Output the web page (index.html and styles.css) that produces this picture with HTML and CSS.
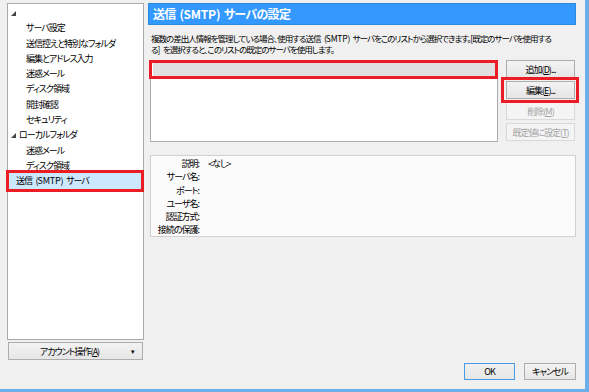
FILE: index.html
```html
<!DOCTYPE html>
<html lang="ja">
<head>
<meta charset="utf-8">
<link rel="stylesheet" href="styles.css">
</head>
<body>
<div class="window">
  <div class="dialog">
    <div class="content">
      <aside class="sidebar">
        <div class="tree">
          <div class="row lvl0"><svg class="arrow" width="5" height="5" viewBox="0 0 5 5"><polygon points="5,0 5,5 0,5" fill="#444"/></svg></div>
          <div class="row lvl1">サーバ設定</div>
          <div class="row lvl1">送信控えと特別なフォルダ</div>
          <div class="row lvl1">編集とアドレス入力</div>
          <div class="row lvl1">迷惑メール</div>
          <div class="row lvl1">ディスク領域</div>
          <div class="row lvl1">開封確認</div>
          <div class="row lvl1">セキュリティ</div>
          <div class="row lvl0"><svg class="arrow" width="5" height="5" viewBox="0 0 5 5"><polygon points="5,0 5,5 0,5" fill="#444"/></svg>ローカルフォルダ</div>
          <div class="row lvl1">迷惑メール</div>
          <div class="row lvl1">ディスク領域</div>
          <div class="row lvl0 selected"><span class="sel-text">送信 (<span class="lat">SMTP</span>) サーバ</span><span class="mark mark-tree"></span></div>
        </div>
        <button class="btn account"><span class="acc-label">アカウント操作(<u>A</u>)</span><span class="caret">▾</span></button>
      </aside>
      <main class="main">
        <h1 class="header">送信 (<span class="lat">SMTP</span>) サーバの設定</h1>
        <p class="desc">複数の差出人情報を管理している場合、使用する送信 (<span class="lat">SMTP</span>) サーバをこのリストから選択できます。[既定のサーバを使用する<br>る] を選択すると、このリストの既定のサーバを使用します。</p>
        <div class="list-row">
          <div class="listbox">
            <div class="list-item"></div>
            <span class="mark mark-list"></span>
          </div>
          <div class="side-buttons">
            <button class="btn side">追加(<u>D</u>)...</button>
            <div class="edit-wrap">
              <button class="btn side">編集(<u>E</u>)...</button>
              <span class="mark mark-edit"></span>
            </div>
            <button class="btn side disabled">削除(<u>M</u>)</button>
            <button class="btn side disabled">既定値に設定(<u>T</u>)</button>
          </div>
        </div>
        <div class="details">
          <span class="lbl">説明:</span><span class="val">&lt;なし&gt;</span>
          <span class="lbl">サーバ名:</span><span class="val"></span>
          <span class="lbl">ポート:</span><span class="val"></span>
          <span class="lbl">ユーザ名:</span><span class="val"></span>
          <span class="lbl">認証方式:</span><span class="val"></span>
          <span class="lbl">接続の保護:</span><span class="val"></span>
        </div>
      </main>
    </div>
    <div class="footer">
      <button class="btn foot default">OK</button>
      <button class="btn foot">キャンセル</button>
    </div>
  </div>
</div>
</body>
</html>
```

FILE: styles.css
```css
* { box-sizing: border-box; }
html, body { margin: 0; padding: 0; }
body {
  width: 589px;
  height: 392px;
  overflow: hidden;
  background: #f0f0f0;
  font-family: "Noto Sans CJK JP", "Noto Sans", sans-serif;
  font-size: 9px;
  letter-spacing: -1px;
  word-spacing: 2.5px;
  font-feature-settings: "palt";
  color: #000;
}
.lat { letter-spacing: -0.2px; }
.window {
  width: 589px;
  height: 392px;
  border-right: 4px solid #6aaeea;
  border-bottom: 3px solid #6aaeea;
}
.dialog {
  height: 389px;
  padding: 3px 9px 0 7px;
  display: flex;
  flex-direction: column;
}
.content {
  display: flex;
  gap: 4px;
  height: 357px;
}
.sidebar {
  width: 137px;
  display: flex;
  flex-direction: column;
}
.tree {
  height: 337px;
  background: #fff;
  border: 1px solid #a9a9a9;
  padding-top: 1px;
}
.row {
  height: 15.3px;
  line-height: 15.3px;
  white-space: nowrap;
  display: flex;
  align-items: center;
}
.lvl0 { padding-left: 3px; }
.lvl1 { padding-left: 18px; }
.arrow { margin-right: 3px; margin-top: 1px; flex: none; }
.selected {
  position: relative;
  background: #cce8ff;
  padding-left: 8px;
}
.mark {
  position: absolute;
  border: 3px solid #ec1c24;
  pointer-events: none;
}
.mark-tree { left: -2px; right: -1px; top: -3px; bottom: -3px; }
.btn {
  font: inherit;
  letter-spacing: inherit;
  word-spacing: inherit;
  color: #000;
  background: linear-gradient(#f3f3f3, #e6e6e6);
  border: 1px solid #adadad;
  padding: 0;
  margin: 0;
  display: flex;
  align-items: center;
  justify-content: center;
  white-space: nowrap;
}
.btn u { text-decoration: underline; text-underline-offset: 1px; }
.account {
  margin: 2px 0 0 1px;
  width: 135px;
  height: 18px;
}
.acc-label { flex: 1; text-align: center; padding-left: 8px; }
.caret { width: 20px; font-size: 7px; text-align: center; }
.main {
  width: 428px;
  display: flex;
  flex-direction: column;
}
.header {
  margin: 0;
  height: 22px;
  background: #3399ff;
  border: 1px solid #2c88e0;
  color: #fff;
  font-size: 12px;
  letter-spacing: -0.7px;
  word-spacing: 2px;
  font-weight: bold;
  line-height: 20px;
  padding-left: 4px;
}
.desc {
  margin: 8px 0 0 3px;
  font-size: 8.5px;
  line-height: 11px;
  white-space: nowrap;
}
.list-row {
  display: flex;
  gap: 8px;
  margin-top: 5px;
  margin-left: 2px;
}
.listbox {
  position: relative;
  width: 348px;
  height: 82px;
  background: #fff;
  border: 1px solid #adadad;
}
.list-item {
  margin: 2px 2px 0 2px;
  height: 13px;
  background: #e0e0e0;
}
.mark-list { left: -2px; right: -1px; top: -1px; bottom: 62px; }
.side-buttons {
  display: flex;
  flex-direction: column;
  gap: 3px;
  width: 69px;
}
.side { width: 69px; height: 18px; }
.edit-wrap { position: relative; }
.mark-edit { left: -5px; right: -4px; top: -4px; bottom: -4px; }
.disabled {
  color: #a3a3a3;
  background: #f4f4f4;
  border-color: #d9d9d9;
}
.details {
  margin: 13px 0 0 2px;
  height: 82px;
  background: #fbfbfb;
  border: 1px solid #d0d0d0;
  padding-top: 1px;
  display: grid;
  grid-template-columns: 48px 1fr;
  grid-auto-rows: 13.3px;
  column-gap: 9px;
  align-content: start;
  line-height: 13.3px;
}
.lbl { text-align: right; white-space: nowrap; }
.footer {
  display: flex;
  justify-content: flex-end;
  gap: 9px;
  margin-top: 3px;
}
.foot { height: 17px; width: 52px; }
.default {
  width: 51px;
  border-color: #4a9be6;
  background: linear-gradient(#f0f0f0, #e6e6e6);
}
```
